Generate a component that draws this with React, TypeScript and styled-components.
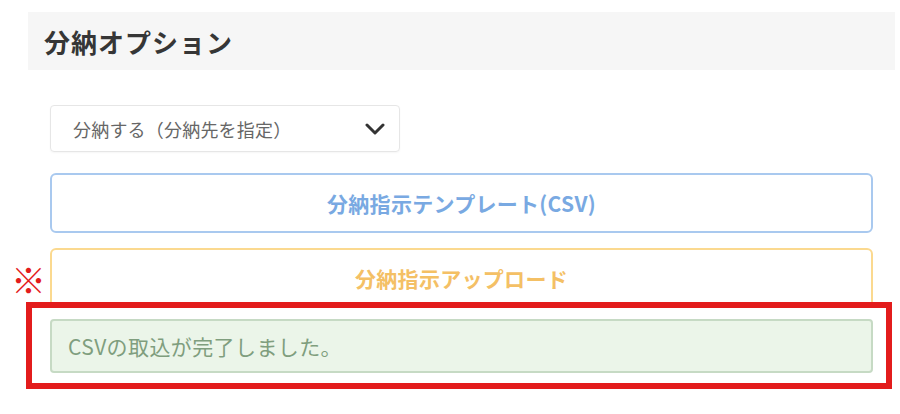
import React from "react";
import styled, { createGlobalStyle } from "styled-components";

const GlobalStyle = createGlobalStyle`
  body {
    margin: 0;
    background: #ffffff;
    font-family: "Noto Sans CJK JP", "Noto Sans", sans-serif;
  }
`;

const Page = styled.div`
  width: 900px;
  height: 414px;
  padding-top: 12px;
  box-sizing: border-box;
  overflow: hidden;
`;

const SectionHeader = styled.div`
  display: flex;
  align-items: center;
  height: 58px;
  margin: 0 5px 0 28px;
  padding-left: 16px;
  background-color: #f6f6f6;
  color: #363636;
  font-size: 26px;
  font-weight: 700;
  letter-spacing: 1px;
`;

const Body = styled.div`
  display: flex;
  flex-direction: column;
  padding: 35px 27px 0 50px;
`;

const Select = styled.div`
  display: flex;
  align-items: center;
  justify-content: space-between;
  width: 350px;
  height: 47px;
  box-sizing: border-box;
  padding: 0 14px 0 22px;
  margin-bottom: 21px;
  border: 1px solid #e6e6e6;
  border-radius: 4px;
  box-shadow: 0 1px 2px rgba(0, 0, 0, 0.04);
  color: #666666;
  font-size: 18px;
  letter-spacing: 0.2px;
`;

const ActionRow = styled.div`
  position: relative;
`;

const Mark = styled.span`
  position: absolute;
  right: calc(100% + 4px);
  top: 50%;
  transform: translateY(-50%);
  color: #e31c1c;
  font-size: 35px;
  line-height: 1;
`;

const OutlineButton = styled.div<{ $tone: "blue" | "orange"; $gap?: number }>`
  display: flex;
  align-items: center;
  justify-content: center;
  height: 60px;
  box-sizing: border-box;
  margin-bottom: ${(p) => p.$gap ?? 0}px;
  border: 2px solid ${(p) => (p.$tone === "blue" ? "#a9c9ef" : "#fbd98f")};
  border-radius: 6px;
  background: #ffffff;
  color: ${(p) => (p.$tone === "blue" ? "#79a9e2" : "#f4c065")};
  font-size: 21px;
  font-weight: 700;
  letter-spacing: 0.3px;
`;

const Highlight = styled.div`
  position: relative;
  z-index: 1;
  margin: -6px -19px 0 -24px;
  padding: 11px 13px 10px 18px;
  border: 6px solid #e31c1c;
  background: #ffffff;
`;

const Alert = styled.div`
  display: flex;
  align-items: center;
  height: 54px;
  box-sizing: border-box;
  padding-left: 16px;
  border: 2px solid #c6dac4;
  border-radius: 4px;
  background: #ebf5e9;
  color: #7f9e7e;
  font-size: 21px;
  letter-spacing: 0.4px;
`;

function Chevron() {
  return (
    <svg width="20" height="12" viewBox="0 0 20 12">
      <path
        d="M2 2 L10 10 L18 2"
        fill="none"
        stroke="#333333"
        strokeWidth="3"
        strokeLinecap="round"
        strokeLinejoin="round"
      />
    </svg>
  );
}

export default function App() {
  return (
    <Page>
      <GlobalStyle />
      <SectionHeader>分納オプション</SectionHeader>
      <Body>
        <Select>
          <span>分納する（分納先を指定）</span>
          <Chevron />
        </Select>
        <OutlineButton $tone="blue" $gap={15}>
          分納指示テンプレート(CSV)
        </OutlineButton>
        <ActionRow>
          <Mark>※</Mark>
          <OutlineButton $tone="orange">分納指示アップロード</OutlineButton>
        </ActionRow>
        <Highlight>
          <Alert>CSVの取込が完了しました。</Alert>
        </Highlight>
      </Body>
    </Page>
  );
}
